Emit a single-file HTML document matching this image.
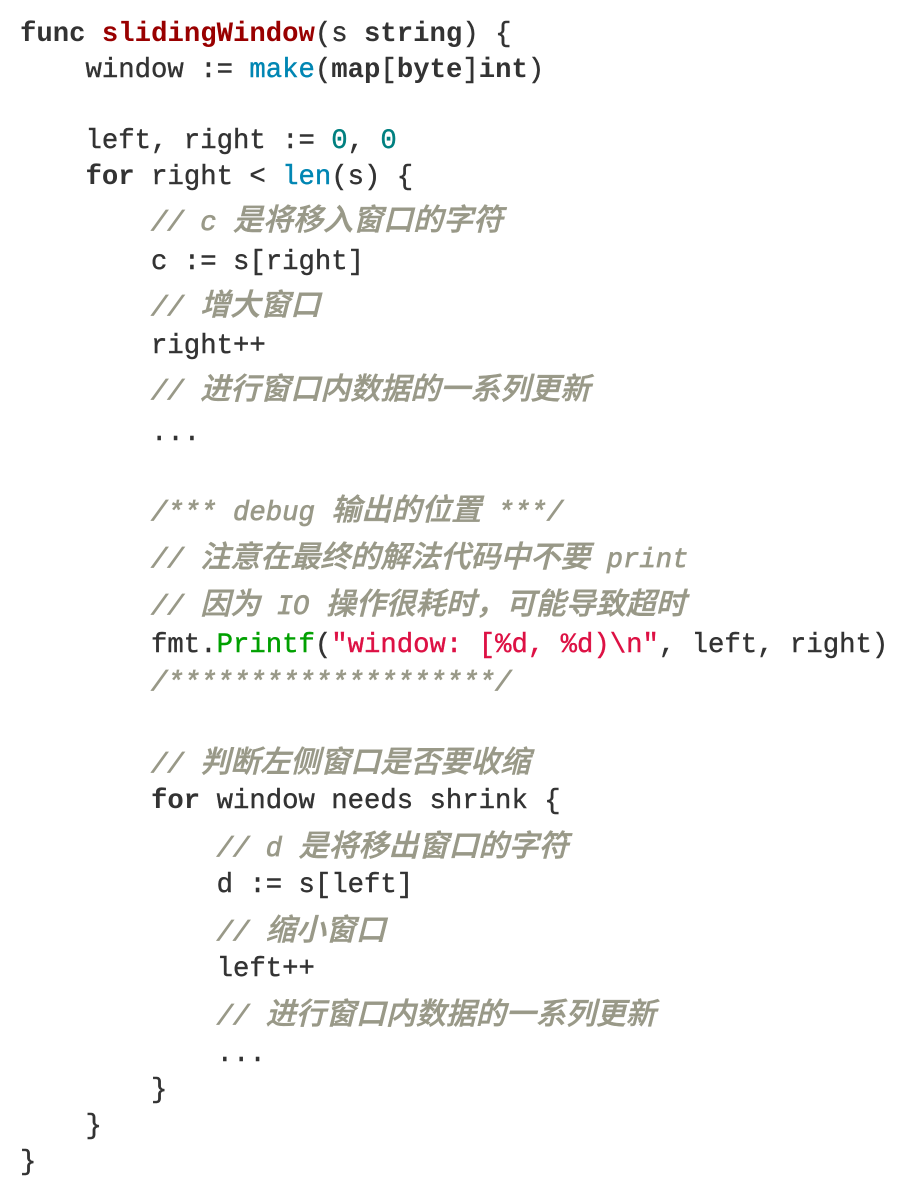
<!DOCTYPE html>
<html><head><meta charset="utf-8"><style>
body{margin:0;background:#fff;width:914px;height:1204px;position:relative;overflow:hidden}
.l{position:absolute;left:20px;height:36px;line-height:36px;font-family:"Liberation Mono","Noto Sans CJK SC",monospace;font-size:27.3px;color:#333;white-space:pre;-webkit-text-stroke:0.4px currentColor}
b{font-weight:bold;-webkit-text-stroke:0}
.f{color:#990000;font-weight:bold;-webkit-text-stroke:0}
.c{color:#0086b3}
.n{color:#008080}
.g{color:#998;font-style:italic;-webkit-text-stroke:0.7px currentColor}
.p{color:#00a000}
.s{color:#dd1144}
i{font-style:italic;font-size:30px;font-family:"Noto Sans CJK SC",sans-serif;font-weight:500;-webkit-text-stroke:0.5px currentColor;line-height:1}
</style></head><body>
<div class="l" style="top:17px"><b>func</b> <span class="f">slidingWindow</span>(s <b>string</b>) {</div>
<div class="l" style="top:53px">    window := <span class="c">make</span>(<b>map</b>[<b>byte</b>]<b>int</b>)</div>
<div class="l" style="top:124px">    left, right := <span class="n">0</span>, <span class="n">0</span></div>
<div class="l" style="top:160px">    <b>for</b> right &lt; <span class="c">len</span>(s) {</div>
<div class="l g" style="top:202px">        // c <i>是将移入窗口的字符</i></div>
<div class="l" style="top:245px">        c := s[right]</div>
<div class="l g" style="top:287px">        // <i>增大窗口</i></div>
<div class="l" style="top:329px">        right++</div>
<div class="l g" style="top:371px">        // <i>进行窗口内数据的一系列更新</i></div>
<div class="l" style="top:416px">        ...</div>
<div class="l g" style="top:492px">        /*** debug <i>输出的位置</i> ***/</div>
<div class="l g" style="top:539px">        // <i>注意在最终的解法代码中不要</i> print</div>
<div class="l g" style="top:586px">        // <i>因为</i> IO <i>操作很耗时，可能导致超时</i></div>
<div class="l" style="top:628px">        fmt.<span class="p">Printf</span>(<span class="s">"window: [%d, %d)\n"</span>, left, right)</div>
<div class="l g" style="top:666px">        /********************/</div>
<div class="l g" style="top:744px">        // <i>判断左侧窗口是否要收缩</i></div>
<div class="l" style="top:784px">        <b>for</b> window needs shrink {</div>
<div class="l g" style="top:828px">            // d <i>是将移出窗口的字符</i></div>
<div class="l" style="top:868px">            d := s[left]</div>
<div class="l g" style="top:912px">            // <i>缩小窗口</i></div>
<div class="l" style="top:952px">            left++</div>
<div class="l g" style="top:996px">            // <i>进行窗口内数据的一系列更新</i></div>
<div class="l" style="top:1037px">            ...</div>
<div class="l" style="top:1073px">        }</div>
<div class="l" style="top:1109px">    }</div>
<div class="l" style="top:1145px">}</div>
</body></html>
